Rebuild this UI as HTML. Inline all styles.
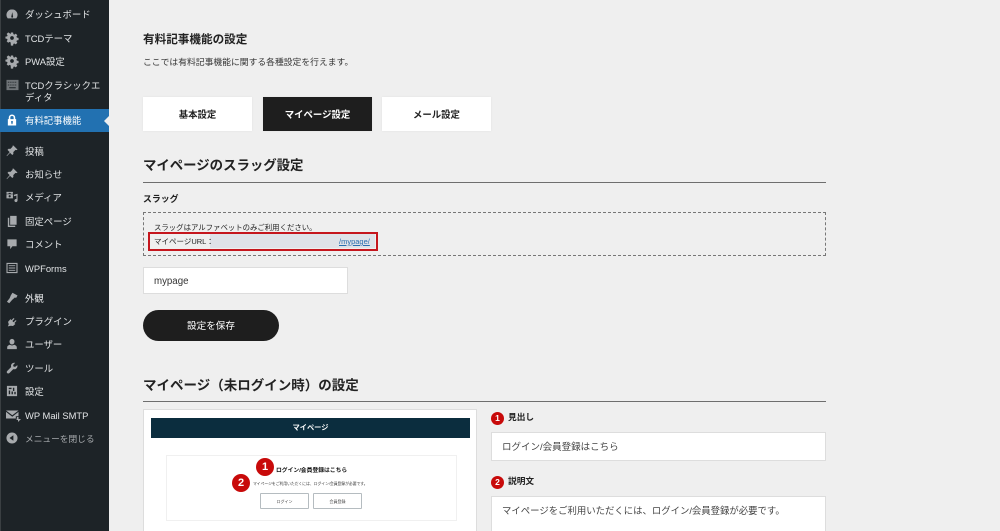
<!DOCTYPE html>
<html lang="ja"><head><meta charset="utf-8"><style>
html,body{margin:0;padding:0;width:1000px;height:531px;overflow:hidden;background:#efefef}
body{position:relative;font-family:"Liberation Sans","Noto Sans CJK JP",sans-serif;color:#222}
.a{position:absolute;white-space:nowrap}
#bg{position:absolute;left:0;top:0;width:1000px;height:531px;background:#efefef}
#side{position:absolute;left:0;top:0;width:109px;height:531px;background:#1d2327;border-left:1px solid #3a3f42;box-sizing:border-box}
.m{position:absolute;left:25px;font-size:9.4px;line-height:12px;color:#e2e4e6;white-space:nowrap}
.i{position:absolute;left:6px;width:12px;height:12px;overflow:visible}
.i *{fill:#a7aaad}
.h2{font-size:13.4px;font-weight:700;line-height:18px;color:#222}
.tab{position:absolute;top:97px;width:109px;height:34px;background:#fff;text-align:center;line-height:36px;font-size:9.4px;font-weight:700;color:#222;box-shadow:0 0 2px rgba(0,0,0,.06)}
.rule{position:absolute;left:143px;width:683px;height:1px;background:#6e6e6e}
.dot{position:absolute;border-radius:50%;background:#c80a0a;color:#fff;text-align:center;font-weight:700}
</style></head><body>
<div id="bg"></div>
<div id="side"></div>
<div class="a" style="left:0;top:109px;width:109px;height:23px;background:#2271b1"></div>
<div class="a" style="left:104px;top:115px;width:0;height:0;border-top:6px solid transparent;border-bottom:6px solid transparent;border-right:6px solid #efefef"></div>

<svg class="i" style="top:8px" viewBox="0 0 13 13"><path d="M6.5 1.5A6 6 0 0 0 .5 7.5c0 1.500.5 2.700 1.400 3.700h9.200c.9-1 1.400-2.200 1.400-3.700a6 6 0 0 0-6-6zM5.800 9l1-4.500L7.600 9a1 1 0 1 1-1.800 0z"/></svg>
<svg class="i" style="top:32px" viewBox="0 0 13 13"><path fill-rule="evenodd" d="M5.300.5h2.400l.3 1.800 1.100.5 1.500-1 1.700 1.700-1 1.500.5 1.100 1.800.3v2.400l-1.800.3-.5 1.100 1 1.500-1.700 1.700-1.500-1-1.100.5-.3 1.800H5.300L5 11.200l-1.100-.5-1.500 1L.7 10l1-1.500-.5-1.100L-.6 7V5l1.800-.3.500-1.100-1-1.500L2.400.4l1.500 1L5 2.300zM6.500 4.500a2 2 0 1 0 0 4 2 2 0 0 0 0-4z"/></svg>
<svg class="i" style="top:55px" viewBox="0 0 13 13"><path fill-rule="evenodd" d="M5.300.5h2.400l.3 1.800 1.100.5 1.500-1 1.700 1.700-1 1.500.5 1.100 1.800.3v2.400l-1.800.3-.5 1.100 1 1.500-1.700 1.700-1.500-1-1.100.5-.3 1.800H5.300L5 11.200l-1.100-.5-1.500 1L.7 10l1-1.500-.5-1.100L-.6 7V5l1.800-.3.500-1.100-1-1.500L2.400.4l1.500 1L5 2.300zM6.500 4.500a2 2 0 1 0 0 4 2 2 0 0 0 0-4z"/></svg>
<svg class="i" style="top:79px;width:13px" viewBox="0 0 13 13"><path style="fill:#6f7478" fill-rule="evenodd" d="M0 1h13v11H0zM1.500 3v1h1V3zm2 0v1h1V3zm2 0v1h1V3zm2 0v1h1V3zm2 0v1h1V3zM1.500 6v1h1V6zm2 0v1h1V6zm2 0v1h1V6zm2 0v1h1V6zm2 0v1h1V6zM3 9v1h7V9z"/></svg>
<svg class="i" style="top:114px" viewBox="0 0 13 13"><path style="fill:#fff" fill-rule="evenodd" d="M3 5.500V4a3.500 3.500 0 0 1 7 0v1.500h1V12.500H2V5.500zM4.700 5.500h3.600V4a1.800 1.800 0 0 0-3.600 0zM6.500 7.500a1.100 1.100 0 0 0-.6 2v1.500h1.200V9.500a1.100 1.100 0 0 0-.6-2z"/></svg>
<svg class="i" style="top:145px" viewBox="0 0 13 13"><path d="M8 .5l4.500 4.500-1.300.6-.9-.3-2.400 2.400.1 2-1.200 1.200-2.400-2.400L1 12l-.4-.4 3.400-3.900L1.600 5.300l1.200-1.200 2 .1 2.400-2.400-.3-.9z"/></svg>
<svg class="i" style="top:168px" viewBox="0 0 13 13"><path d="M8 .5l4.500 4.500-1.300.6-.9-.3-2.400 2.400.1 2-1.200 1.200-2.400-2.400L1 12l-.4-.4 3.400-3.900L1.600 5.300l1.200-1.200 2 .1 2.400-2.400-.3-.9z"/></svg>
<svg class="i" style="top:191px" viewBox="0 0 13 13"><path fill-rule="evenodd" d="M.5 1h7v2H5.500L4.800 2H3.200l-.7 1H.5zM.5 3.500h7V8h-7zM4 4.500a1.200 1.200 0 1 0 0 2.400 1.200 1.200 0 0 0 0-2.400zM12.500 3v7.300a1.700 1.700 0 1 1-1.200-1.600V5L8.500 5.700V4z"/></svg>
<svg class="i" style="top:215px" viewBox="0 0 13 13"><path d="M4.500 1H11.500V10.500H4.500zM2 3H3.500V11.500H10V13H2z"/></svg>
<svg class="i" style="top:238px" viewBox="0 0 13 13"><path d="M1.500 1.500h10v7.500H7L4.500 12V9H1.500z"/></svg>
<svg class="i" style="top:262px" viewBox="0 0 13 13"><path fill-rule="evenodd" d="M.5 1h12v11H.5zM1.700 2.200v8.600h9.600V2.200zM3 3.500h7v1H3zM3 6h7v1H3zM3 8.500h7v1H3z"/></svg>
<svg class="i" style="top:292px" viewBox="0 0 13 13"><path d="M7 .8l5.500 3-1.500 2.500-1.400-.4L6.800 8.400 3.500 12.200 1 10.500 4 6.600 5.200 3.700z"/></svg>
<svg class="i" style="top:315px" viewBox="0 0 13 13"><path d="M2 12.300l1-2.300-.8-2.500 1-1.200 1.600-1.800 1.100 1L8.300 3.300l.9.9-2.300 2.300 1.300 1.300 2.300-2.300.9.900-2.300 2.300 1 1.100-2.500 2.100-2.300-.3z"/></svg>
<svg class="i" style="top:338px" viewBox="0 0 13 13"><path d="M6.500 1a2.700 2.700 0 0 1 2.700 2.900c0 1.500-1 3.100-2.700 3.100S3.800 5.400 3.800 3.900A2.700 2.700 0 0 1 6.500 1zM4.300 7.300c1.300 1 3.100 1 4.400 0 1.500.3 3 1.300 3 2.700V12H1.300v-2c0-1.400 1.500-2.400 3-2.700z"/></svg>
<svg class="i" style="top:362px" viewBox="0 0 13 13"><path d="M12.300 3.400c.4 1.600-.2 3.200-1.500 4-1 .6-2 .6-2.900.3L3.600 12c-.7.6-1.700.6-2.300 0-.7-.7-.6-1.700 0-2.300l4.300-4.300c-.3-.9-.3-2 .3-2.900.8-1.300 2.400-1.900 4-1.500L7.700 3.200l.4 1.700 1.700.4z"/></svg>
<svg class="i" style="top:385px" viewBox="0 0 13 13"><path fill-rule="evenodd" d="M1 1h11v11H1zM3 3v1.500h3V3zm4.500 0v3.500H9V3zM3 6v4h1.500V6zm3 1v3h1.500V7zm3 .5V10h1.500V7.500z"/></svg>
<svg class="i" style="left:6px;top:409px;width:15px;height:13px" viewBox="0 0 15 13"><path d="M0 1.500h12.500L6.300 6.300zM0 2.900l6.300 4.800 6.200-4.800v4.300H9.800v2.300H0zM11 8h1.500v2H15l-3 3v-2h-1.500z"/></svg>
<svg class="i" style="top:432px" viewBox="0 0 13 13"><path fill-rule="evenodd" d="M6.500.5a6 6 0 1 1 0 12 6 6 0 0 1 0-12zM8 3.500L3.800 6.500 8 9.500z"/></svg>

<div class="m" style="top:9px">ダッシュボード</div>
<div class="m" style="top:33px">TCDテーマ</div>
<div class="m" style="top:56px">PWA設定</div>
<div class="m" style="top:80px">TCDクラシックエ</div>
<div class="m" style="top:92px">ディタ</div>
<div class="m" style="top:115px;color:#fff">有料記事機能</div>
<div class="m" style="top:146px">投稿</div>
<div class="m" style="top:169px">お知らせ</div>
<div class="m" style="top:192px">メディア</div>
<div class="m" style="top:216px">固定ページ</div>
<div class="m" style="top:239px">コメント</div>
<div class="m" style="top:263px">WPForms</div>
<div class="m" style="top:293px">外観</div>
<div class="m" style="top:316px">プラグイン</div>
<div class="m" style="top:339px">ユーザー</div>
<div class="m" style="top:363px">ツール</div>
<div class="m" style="top:386px">設定</div>
<div class="m" style="top:410px">WP Mail SMTP</div>
<div class="m" style="top:433px;color:#a7aaad;font-size:8.7px">メニューを閉じる</div>

<div class="a" style="left:143px;top:32px;font-size:11.6px;font-weight:700;line-height:15px">有料記事機能の設定</div>
<div class="a" style="left:143px;top:56px;font-size:8.8px;line-height:13px;color:#333">ここでは有料記事機能に関する各種設定を行えます。</div>

<div class="tab" style="left:143px">基本設定</div>
<div class="tab" style="left:263px;background:#1e1e1e;color:#fff">マイページ設定</div>
<div class="tab" style="left:382px">メール設定</div>

<div class="a h2" style="left:143px;top:157px">マイページのスラッグ設定</div>
<div class="rule" style="top:182px"></div>
<div class="a" style="left:143px;top:192px;font-size:8.9px;font-weight:700;line-height:14px">スラッグ</div>

<div class="a" style="left:143px;top:212px;width:681px;height:42px;border:1px dashed #777"></div>
<div class="a" style="left:154px;top:222px;font-size:7.4px;line-height:12px;color:#222">スラッグはアルファベットのみご利用ください。</div>
<div class="a" style="left:210px;top:234px;width:165px;height:14px;background:#dfe2e8"></div>
<div class="a" style="left:148px;top:232px;width:226px;height:15px;border:2px solid #c5161d"></div>
<div class="a" style="left:154px;top:235px;font-size:7.5px;line-height:13px;color:#222">マイページURL：</div>
<div class="a" style="left:339px;top:235px;font-size:7.5px;line-height:13px;color:#2a6fb0;text-decoration:underline">/mypage/</div>

<div class="a" style="left:143px;top:267px;width:203px;height:25px;background:#fff;border:1px solid #ddd"></div>
<div class="a" style="left:154px;top:275px;font-size:9.7px;line-height:13px;color:#333">mypage</div>

<div class="a" style="left:143px;top:310px;width:136px;height:31px;border-radius:16px;background:#1e1e1e;color:#fff;text-align:center;line-height:33px;font-size:9.6px">設定を保存</div>

<div class="a h2" style="left:143px;top:377px;font-size:13.5px">マイページ（未ログイン時）の設定</div>
<div class="rule" style="top:401px"></div>

<div class="a" style="left:143px;top:409px;width:334px;height:130px;background:#fff;border:1px solid #ddd;box-sizing:border-box"></div>
<div class="a" style="left:151px;top:418px;width:319px;height:20px;background:#0b2d3e;color:#fff;text-align:center;font-size:7.200px;font-weight:700;line-height:20px">マイページ</div>
<div class="a" style="left:166px;top:455px;width:291px;height:66px;border:1px solid #f0f0f0;box-sizing:border-box"></div>
<div class="a" style="left:276px;top:466px;font-size:5.800px;font-weight:700;line-height:10px;color:#111">ログイン/会員登録はこちら</div>
<div class="a" style="left:253px;top:481px;font-size:3.800px;line-height:6px;color:#333">マイページをご利用いただくには、ログイン/会員登録が必要です。</div>
<div class="a" style="left:260px;top:493px;width:49px;height:16px;border:1px solid #b5bcc0;box-sizing:border-box;text-align:center;font-size:4px;line-height:15px;color:#444;border-radius:1px">ログイン</div>
<div class="a" style="left:313px;top:493px;width:49px;height:16px;border:1px solid #b5bcc0;box-sizing:border-box;text-align:center;font-size:4px;line-height:15px;color:#444;border-radius:1px">会員登録</div>
<div class="dot" style="left:256px;top:458px;width:18px;height:18px;font-size:11px;line-height:18px">1</div>
<div class="dot" style="left:232px;top:474px;width:18px;height:18px;font-size:11px;line-height:18px">2</div>

<div class="dot" style="left:491px;top:412px;width:13px;height:13px;font-size:8.500px;line-height:13px">1</div>
<div class="a" style="left:508px;top:411px;font-size:8.700px;font-weight:700;line-height:13px">見出し</div>
<div class="a" style="left:491px;top:432px;width:335px;height:29px;background:#fff;border:1px solid #ddd;box-sizing:border-box"></div>
<div class="a" style="left:502px;top:441px;font-size:9.500px;line-height:14px;color:#444">ログイン/会員登録はこちら</div>
<div class="dot" style="left:491px;top:475.500px;width:13px;height:13px;font-size:8.500px;line-height:13px">2</div>
<div class="a" style="left:508px;top:475px;font-size:8.700px;font-weight:700;line-height:13px">説明文</div>
<div class="a" style="left:491px;top:496px;width:335px;height:50px;background:#fff;border:1px solid #ddd;box-sizing:border-box"></div>
<div class="a" style="left:502px;top:504px;font-size:9.400px;line-height:14px;color:#444">マイページをご利用いただくには、ログイン/会員登録が必要です。</div>
</body></html>
